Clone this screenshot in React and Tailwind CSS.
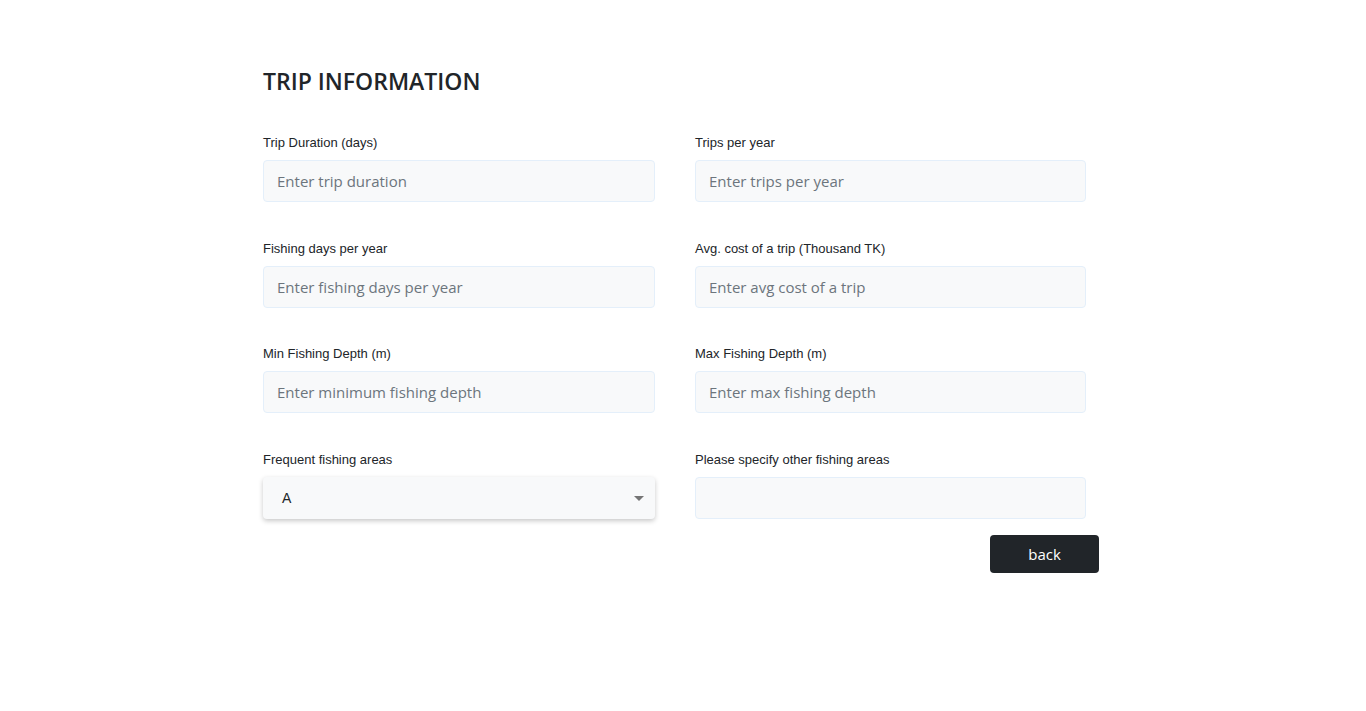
import { useState } from "react";

const fields = [
    { label: "Trip Duration (days)", name: "duration", placeholder: "Enter trip duration" },
    { label: "Trips per year", name: "tripsPerYear", placeholder: "Enter trips per year" },
    { label: "Fishing days per year", name: "fishingDays", placeholder: "Enter fishing days per year" },
    { label: "Avg. cost of a trip (Thousand TK)", name: "avgCost", placeholder: "Enter avg cost of a trip" },
    { label: "Min Fishing Depth (m)", name: "minDepth", placeholder: "Enter minimum fishing depth" },
    { label: "Max Fishing Depth (m)", name: "maxDepth", placeholder: "Enter max fishing depth" },
];

function App() {
    const [form, setForm] = useState({ area: "A", otherAreas: "" });

    const handleChange = (e) => {
        setForm({ ...form, [e.target.name]: e.target.value });
    };

    const inputClass =
        "w-full h-[42px] px-[13px] bg-[#f8f9fa] border border-[#e4effa] rounded-[4px] outline-none text-[15px] text-[#212529] placeholder:text-[#6c757d] font-['Open_Sans',sans-serif]";

    const labelClass =
        "block h-[20px] leading-[22px] mb-[8px] text-[13px] text-[#212529] font-['Liberation_Sans',Arial,sans-serif]";

    return (
        <div className="min-h-screen bg-white">
            <div className="w-[836px] ml-[263px] pt-[65px]">
                <h2 className="h-[32px] leading-[32px] text-[23px] font-semibold text-[#212529] font-['Open_Sans',sans-serif] mb-[35px]">
                    TRIP INFORMATION
                </h2>

                <div className="grid grid-cols-[392px_391px] gap-x-[40px] gap-y-[35.7px]">
                    {fields.map((f) => (
                        <div key={f.name}>
                            <label className={labelClass}>{f.label}</label>
                            <input
                                type="text"
                                name={f.name}
                                placeholder={f.placeholder}
                                className={inputClass}
                                onChange={handleChange}
                            />
                        </div>
                    ))}

                    <div>
                        <label className={labelClass}>Frequent fishing areas</label>
                        <div className="relative h-[42px] bg-[#f8f9fa] rounded-[4px] shadow-[0_2px_5px_rgba(0,0,0,0.22)] flex items-center">
                            <span className="pl-[19px] text-[14px] text-[#212529] font-['Liberation_Sans',Arial,sans-serif]">
                                {form.area}
                            </span>
                            <span className="absolute right-[11px] top-[19px] w-0 h-0 border-l-[5px] border-r-[5px] border-t-[5px] border-l-transparent border-r-transparent border-t-[#757575]" />
                        </div>
                    </div>

                    <div>
                        <label className={labelClass}>Please specify other fishing areas</label>
                        <input
                            type="text"
                            name="otherAreas"
                            className={inputClass}
                            onChange={handleChange}
                        />
                    </div>
                </div>

                <div className="flex justify-end mt-[16px]">
                    <button className="w-[109px] h-[38px] bg-[#212529] text-white rounded-[4px] text-[15px] font-['Open_Sans',sans-serif]">
                        back
                    </button>
                </div>
            </div>
        </div>
    );
}

export default App;
